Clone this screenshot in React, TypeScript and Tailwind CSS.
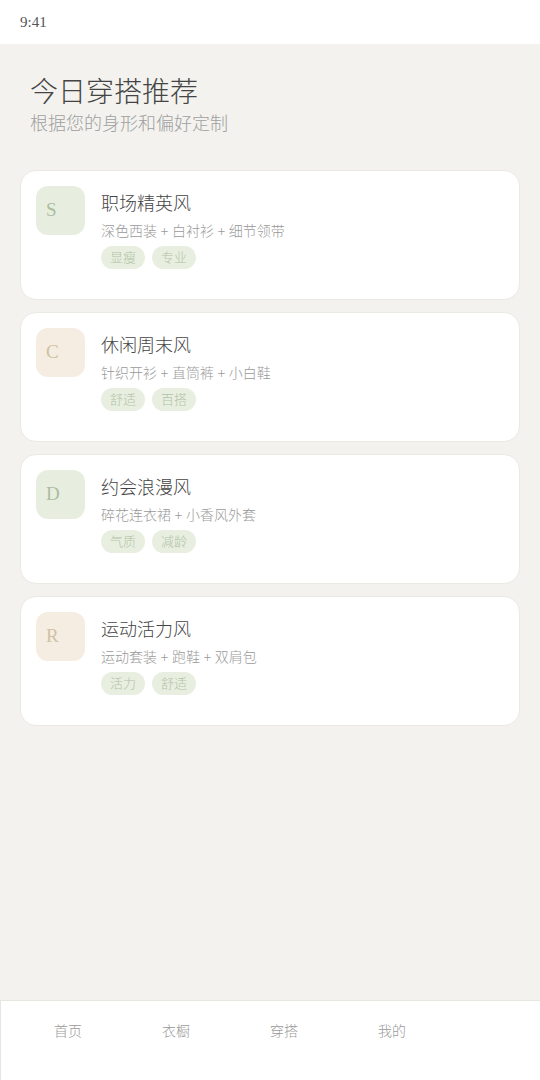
const looks = [
  {
    letter: "S",
    tone: "green",
    title: "职场精英风",
    desc: "深色西装 + 白衬衫 + 细节领带",
    tags: ["显瘦", "专业"],
  },
  {
    letter: "C",
    tone: "beige",
    title: "休闲周末风",
    desc: "针织开衫 + 直筒裤 + 小白鞋",
    tags: ["舒适", "百搭"],
  },
  {
    letter: "D",
    tone: "green",
    title: "约会浪漫风",
    desc: "碎花连衣裙 + 小香风外套",
    tags: ["气质", "减龄"],
  },
  {
    letter: "R",
    tone: "beige",
    title: "运动活力风",
    desc: "运动套装 + 跑鞋 + 双肩包",
    tags: ["活力", "舒适"],
  },
];

const tabs = ["首页", "衣橱", "穿搭", "我的"];

function LookCard({ look }: { look: (typeof looks)[number] }) {
  const box =
    look.tone === "green"
      ? "bg-[#e7eedf] text-[#adbc9f]"
      : "bg-[#f5ede1] text-[#cfc2a4]";
  return (
    <div className="flex h-[130px] gap-4 rounded-2xl border border-[#ebe9e4] bg-white p-[15px]">
      <div
        className={`flex h-[49px] w-[49px] shrink-0 items-center rounded-xl pl-[10px] text-[19px] ${box}`}
      >
        {look.letter}
      </div>
      <div className="min-w-0">
        <div className="mt-[4px] text-[18px] leading-[28px] font-light text-[#444]">
          {look.title}
        </div>
        <div className="mt-1 text-[14px] leading-5 font-light text-[#9a9a9a]">
          {look.desc}
        </div>
        <div className="mt-1 flex gap-[7px]">
          {look.tags.map((t) => (
            <span
              key={t}
              className="rounded-full bg-[#e8efe1] px-[9px] py-1 text-[13px] leading-[15px] font-light text-[#b3c2a6]"
            >
              {t}
            </span>
          ))}
        </div>
      </div>
    </div>
  );
}

export default function App() {
  return (
    <div
      className="flex h-[1080px] w-[540px] flex-col bg-[#f3f2ee]"
      style={{ fontFamily: '"Liberation Serif", "Noto Sans CJK SC", serif' }}
    >
      <div className="flex h-11 shrink-0 items-center bg-white pl-5 text-[15px] text-[#555]">
        9:41
      </div>

      <div className="flex-1">
        <div className="px-[30px] pt-[31px]">
          <h1 className="text-[28px] leading-[36px] font-light text-[#444]">
            今日穿搭推荐
          </h1>
          <p className="text-[18px] leading-[26px] font-light text-[#a0a0a0]">
            根据您的身形和偏好定制
          </p>
        </div>

        <div className="mt-[33px] flex flex-col gap-3 px-5">
          {looks.map((l) => (
            <LookCard key={l.title} look={l} />
          ))}
        </div>
      </div>

      <nav className="flex h-20 shrink-0 border-t border-l border-[#e8e6e1] bg-white pt-[21px] pl-[13px]">
        {tabs.map((t) => (
          <div
            key={t}
            className="w-[108px] text-center text-[14px] leading-5 font-light text-[#9a9a9a]"
          >
            {t}
          </div>
        ))}
      </nav>
    </div>
  );
}
